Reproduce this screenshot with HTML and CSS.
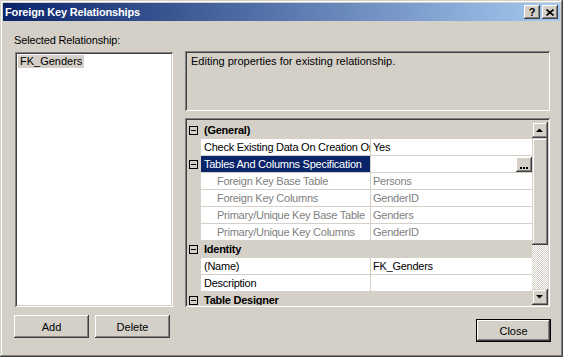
FILE: index.html
```html
<!DOCTYPE html>
<html lang="en">
<head>
  <meta charset="UTF-8">
  <title>Foreign Key Relationships</title>
  <link rel="stylesheet" href="styles.css">
</head>
<body>

<div class="window">
  <div class="titlebar">
    <span class="title">Foreign Key Relationships</span>
    <div class="caption-buttons">
      <button class="caption-btn help">?</button>
      <button class="caption-btn">
        <svg width="8" height="7" viewBox="0 0 8 7"><path d="M0.5 0.5 L7.5 6.5 M7.5 0.5 L0.5 6.5" stroke="#000" stroke-width="1.6"/></svg>
      </button>
    </div>
  </div>

  <div class="content">
    <div class="left-pane">
      <div class="label">Selected Relationship:</div>
      <div class="listbox">
        <div class="list-item">FK_Genders</div>
      </div>
      <div class="buttons">
        <button class="btn">Add</button>
        <button class="btn">Delete</button>
      </div>
    </div>

    <div class="right-pane">
      <div class="description">Editing properties for existing relationship.</div>

      <div class="propgrid">
        <div class="rows">
          <div class="row category">
            <span class="gutter"><svg class="toggle" width="9" height="9" viewBox="0 0 9 9"><rect x="0.5" y="0.5" width="8" height="8" fill="none" stroke="#000"/><path d="M2 4.5 H7" stroke="#000"/></svg></span>
            <span class="cat-title">(General)</span>
          </div>
          <div class="row">
            <span class="gutter"></span>
            <span class="name">Check Existing Data On Creation Or Re-Enabling</span>
            <span class="value">Yes</span>
          </div>
          <div class="row selected">
            <span class="gutter"><svg class="toggle" width="9" height="9" viewBox="0 0 9 9"><rect x="0.5" y="0.5" width="8" height="8" fill="none" stroke="#000"/><path d="M2 4.5 H7" stroke="#000"/></svg></span>
            <span class="name">Tables And Columns Specification</span>
            <span class="value">
              <button class="ellipsis">
                <svg width="16" height="15" viewBox="0 0 16 15"><rect x="4" y="10" width="2" height="2"/><rect x="7" y="10" width="2" height="2"/><rect x="10" y="10" width="2" height="2"/></svg>
              </button>
            </span>
          </div>
          <div class="row sub">
            <span class="gutter"></span>
            <span class="name">Foreign Key Base Table</span>
            <span class="value">Persons</span>
          </div>
          <div class="row sub">
            <span class="gutter"></span>
            <span class="name">Foreign Key Columns</span>
            <span class="value">GenderID</span>
          </div>
          <div class="row sub">
            <span class="gutter"></span>
            <span class="name">Primary/Unique Key Base Table</span>
            <span class="value">Genders</span>
          </div>
          <div class="row sub">
            <span class="gutter"></span>
            <span class="name">Primary/Unique Key Columns</span>
            <span class="value">GenderID</span>
          </div>
          <div class="row category">
            <span class="gutter"><svg class="toggle" width="9" height="9" viewBox="0 0 9 9"><rect x="0.5" y="0.5" width="8" height="8" fill="none" stroke="#000"/><path d="M2 4.5 H7" stroke="#000"/></svg></span>
            <span class="cat-title">Identity</span>
          </div>
          <div class="row">
            <span class="gutter"></span>
            <span class="name">(Name)</span>
            <span class="value">FK_Genders</span>
          </div>
          <div class="row">
            <span class="gutter"></span>
            <span class="name">Description</span>
            <span class="value"></span>
          </div>
          <div class="row category">
            <span class="gutter"><svg class="toggle" width="9" height="9" viewBox="0 0 9 9"><rect x="0.5" y="0.5" width="8" height="8" fill="none" stroke="#000"/><path d="M2 4.5 H7" stroke="#000"/></svg></span>
            <span class="cat-title">Table Designer</span>
          </div>
        </div>

        <div class="vscroll">
          <div class="scroll-btn">
            <svg width="16" height="16" viewBox="0 0 16 16"><polygon points="4,10 11,10 7.5,6.5"/></svg>
          </div>
          <div class="thumb"></div>
          <div class="track"></div>
          <div class="scroll-btn">
            <svg width="16" height="16" viewBox="0 0 16 16"><polygon points="4,6 11,6 7.5,9.5"/></svg>
          </div>
        </div>
      </div>

      <div class="close-row">
        <button class="btn default">Close</button>
      </div>
    </div>
  </div>
</div>

</body>
</html>
```

FILE: styles.css
```css
body {
  margin: 0;
  font-family: "Liberation Sans", Arial, sans-serif;
  font-size: 11px;
  color: #000;
  background-color: #d4d0c8;
}

.window {
  width: 563px;
  height: 357px;
  box-sizing: border-box;
  padding: 3px;
  display: flex;
  flex-direction: column;
  background-color: #d4d0c8;
  box-shadow: inset -1px -1px #404040, inset 1px 1px #d4d0c8,
              inset -2px -2px #808080, inset 2px 2px #fff;
}

/* title bar */
.titlebar {
  height: 18px;
  flex: none;
  display: flex;
  align-items: center;
  justify-content: space-between;
  padding: 0 2px 0 2px;
  background: linear-gradient(to right, #0a246a, #a6caf0);
}

.title {
  color: #fff;
  font-weight: bold;
  letter-spacing: -0.15px;
  white-space: nowrap;
}

.caption-buttons {
  display: flex;
  gap: 2px;
}

.caption-btn {
  width: 16px;
  height: 14px;
  padding: 0;
  border: none;
  display: flex;
  align-items: center;
  justify-content: center;
  font: bold 11px "Liberation Sans", Arial, sans-serif;
  color: #000;
  background-color: #d4d0c8;
  box-shadow: inset -1px -1px #404040, inset 1px 1px #fff,
              inset -2px -2px #808080, inset 2px 2px #d4d0c8;
}

/* content */
.content {
  flex: 1;
  display: flex;
  gap: 12px;
  padding: 0 10px 0 12px;
}

.left-pane {
  width: 158px;
  flex: none;
  display: flex;
  flex-direction: column;
  padding-top: 13px;
}

.label {
  line-height: 13px;
  letter-spacing: -0.15px;
  margin: 0 0 5px -1px;
}

.listbox {
  height: 255px;
  box-sizing: border-box;
  padding: 3px;
  background-color: #fff;
  box-shadow: inset 1px 1px #808080, inset -1px -1px #fff,
              inset 2px 2px #404040, inset -2px -2px #d4d0c8;
}

.list-item {
  width: fit-content;
  padding: 0 2px;
  line-height: 13px;
  background-color: #d4d0c8;
}

.buttons {
  display: flex;
  gap: 6px;
  margin: 8px 0 0 -1px;
}

.btn {
  width: 75px;
  height: 23px;
  padding: 0;
  border: none;
  font: inherit;
  color: #000;
  background-color: #d4d0c8;
  box-shadow: inset -1px -1px #404040, inset 1px 1px #fff,
              inset -2px -2px #808080, inset 2px 2px #d4d0c8;
}

.btn.default {
  border: 1px solid #000;
}

.right-pane {
  flex: 1;
  display: flex;
  flex-direction: column;
  padding-top: 30px;
}

.description {
  height: 60px;
  box-sizing: border-box;
  padding: 4px 6px;
  line-height: 13px;
  background-color: #d4d0c8;
  box-shadow: inset 1px 1px #808080, inset -1px -1px #fff,
              inset 2px 2px #404040, inset -2px -2px #d4d0c8;
}

/* property grid */
.propgrid {
  height: 189px;
  margin-top: 7px;
  box-sizing: border-box;
  padding: 2px;
  display: flex;
  overflow: hidden;
  background-color: #d4d0c8;
  box-shadow: inset 1px 1px #808080, inset -1px -1px #fff,
              inset 2px 2px #404040, inset -2px -2px #d4d0c8;
}

.rows {
  flex: 1;
  padding-top: 2px;
  overflow: hidden;
  letter-spacing: -0.25px;
}

.row {
  height: 17px;
  box-sizing: border-box;
  padding-bottom: 1px;
  display: flex;
  background-color: #d4d0c8;
}

.gutter {
  width: 14px;
  flex: none;
  box-sizing: border-box;
  padding-left: 2px;
  display: flex;
  align-items: center;
}

.toggle {
  display: block;
}

.name {
  width: 169px;
  flex: none;
  box-sizing: border-box;
  padding-left: 3px;
  line-height: 16px;
  white-space: nowrap;
  overflow: hidden;
  background-color: #fff;
}

.value {
  flex: 1;
  margin-left: 1px;
  padding-left: 2px;
  line-height: 16px;
  display: flex;
  align-items: center;
  white-space: nowrap;
  overflow: hidden;
  background-color: #fff;
}

.cat-title {
  padding-left: 3px;
  line-height: 16px;
  font-weight: bold;
}

.selected .name {
  background-color: #0a246a;
  color: #fff;
}

.sub .name {
  padding-left: 16px;
  color: #808080;
}

.sub .value {
  color: #808080;
}

.ellipsis {
  width: 16px;
  height: 15px;
  margin-left: auto;
  padding: 0;
  border: none;
  display: block;
  background-color: #d4d0c8;
  box-shadow: inset -1px -1px #404040, inset 1px 1px #fff,
              inset -2px -2px #808080, inset 2px 2px #d4d0c8;
}

.ellipsis svg {
  display: block;
}

/* scroll bar */
.vscroll {
  width: 16px;
  flex: none;
  margin-top: 2px;
  display: flex;
  flex-direction: column;
}

.scroll-btn,
.thumb {
  background-color: #d4d0c8;
  box-shadow: inset -1px -1px #404040, inset 1px 1px #d4d0c8,
              inset -2px -2px #808080, inset 2px 2px #fff;
}

.scroll-btn {
  height: 16px;
  flex: none;
}

.scroll-btn svg {
  display: block;
}

.thumb {
  height: 107px;
  flex: none;
}

.track {
  flex: 1;
  background-image: conic-gradient(#fff 25%, #d4d0c8 0 50%, #fff 0 75%, #d4d0c8 0);
  background-size: 2px 2px;
}

.close-row {
  display: flex;
  justify-content: flex-end;
  margin: 12px -1px 0 0;
}
```
